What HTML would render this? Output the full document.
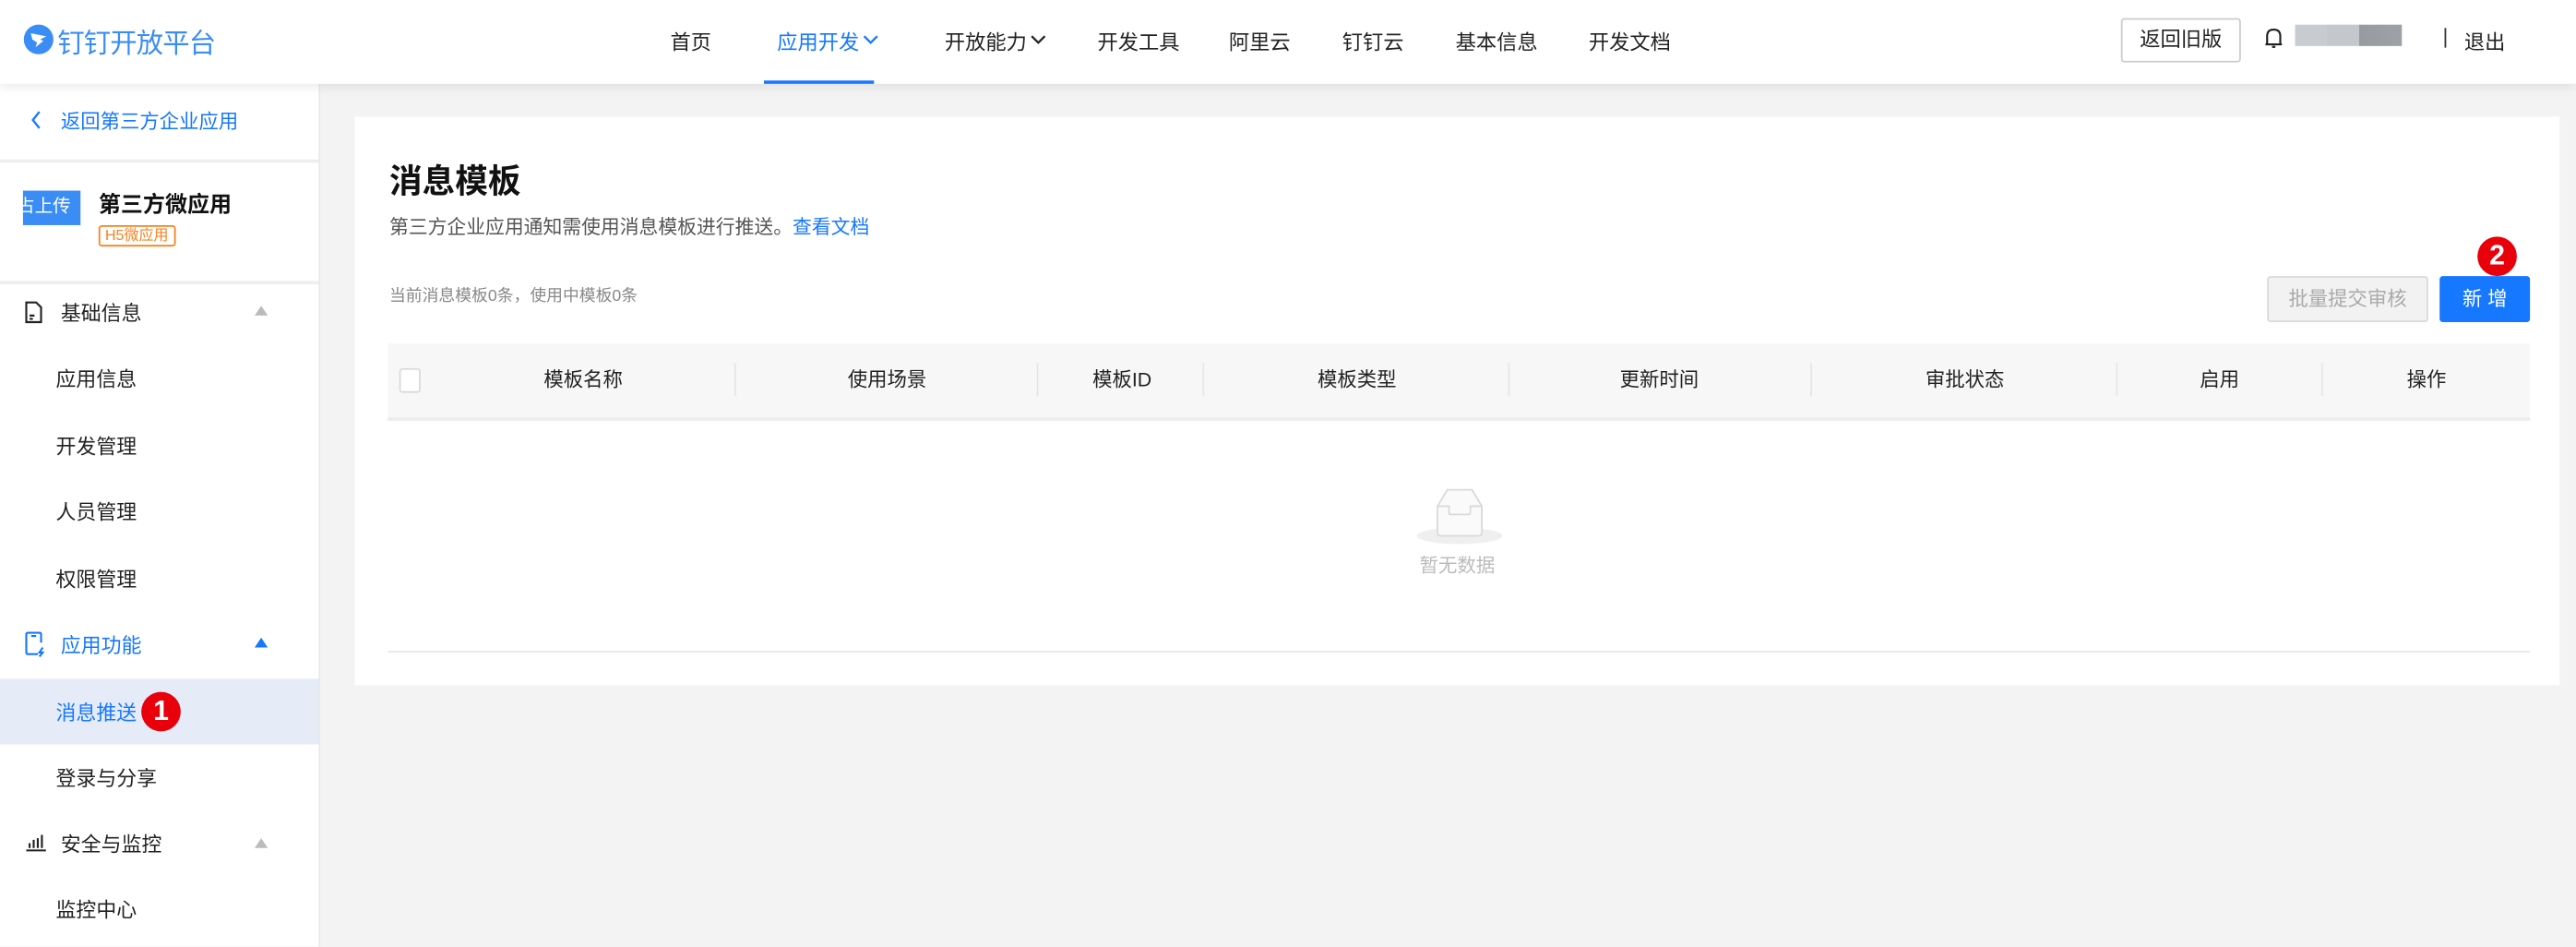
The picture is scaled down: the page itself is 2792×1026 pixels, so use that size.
<!DOCTYPE html>
<html><head><meta charset="utf-8"><style>
html,body{margin:0;padding:0;width:2792px;height:1026px;overflow:hidden;background:#f3f3f3}
#w{position:absolute;left:0;top:0;width:1568px;height:576px;transform:scale(1.78061);transform-origin:0 0;font-family:"Liberation Sans","Noto Sans CJK SC",sans-serif;color:#222;background:#f3f3f3}
.a{position:absolute;white-space:nowrap}
.n{font-size:12.5px;top:15px;color:#222}
.mi{font-size:12.3px;left:34px;color:#222}
.th{top:222px;font-size:12px;color:#222;transform:translateX(-50%)}
.dv{position:absolute;top:221px;width:1px;height:20px;background:#e6e6e6}
.badge{position:absolute;width:24px;height:24px;border-radius:50%;background:#e8000b;color:#fff;font-size:17px;font-weight:bold;text-align:center;line-height:24px}
</style></head><body><div id="w">
<!-- header -->
<div class="a" style="left:0;top:0;width:1568px;height:51px;background:#fff;box-shadow:0 2px 6px rgba(0,0,0,.08);z-index:2">
 <svg class="a" style="left:14px;top:14px" width="19" height="20" viewBox="0 0 20 20"><circle cx="10" cy="10" r="9.5" fill="#3a8df5"/><path d="M5 6 L15 8 L11 10 L13 11 L8 15 L9 12 L6 10 Z" fill="#fff"/></svg>
 <div class="a" style="left:35px;top:13px;font-size:16.5px;color:#3a8df5;letter-spacing:-0.5px">钉钉开放平台</div>
 <div class="a n" style="left:408px">首页</div>
 <div class="a n" style="left:473px;color:#1677ff">应用开发</div>
 <svg class="a" style="left:525px;top:21px" width="10" height="7"><path d="M1 1 L5 5 L9 1" stroke="#1677ff" stroke-width="1.3" fill="none"/></svg>
 <div class="a" style="left:465px;top:49px;width:67px;height:2px;background:#1677ff"></div>
 <div class="a n" style="left:575px">开放能力</div>
 <svg class="a" style="left:627px;top:21px" width="10" height="7"><path d="M1 1 L5 5 L9 1" stroke="#222" stroke-width="1.3" fill="none"/></svg>
 <div class="a n" style="left:668px">开发工具</div>
 <div class="a n" style="left:748px">阿里云</div>
 <div class="a n" style="left:817px">钉钉云</div>
 <div class="a n" style="left:886px">基本信息</div>
 <div class="a n" style="left:967px">开发文档</div>
 <div class="a" style="left:1291px;top:11px;width:71px;height:25px;border:1px solid #ccc;border-radius:2px;font-size:12.5px;text-align:center;line-height:25px">返回旧版</div>
 <svg class="a" style="left:1378px;top:16px" width="12" height="14" viewBox="0 0 12 14"><path d="M2 11 L2 6 Q2 2 6 2 Q10 2 10 6 L10 11 Z M1 11 H11 M5 12.5 H7" stroke="#222" stroke-width="1.2" fill="none"/></svg>
 <div class="a" style="left:1397px;top:15px;width:65px;height:13px;background:linear-gradient(90deg,#c8cbcf 0,#c8cbcf 30%,#c4c7cb 30%,#c4c7cb 60%,#979aa0 60%,#9ea1a6 100%)"></div>
 <div class="a" style="left:1488px;top:17px;width:1px;height:12px;background:#333"></div>
 <div class="a n" style="left:1500px">退出</div>
</div>
<!-- sidebar -->
<div class="a" style="left:0;top:51px;width:194px;height:525px;background:#fff;border-right:1px solid #e8e8e8">
 <svg class="a" style="left:18px;top:16px" width="8" height="12"><path d="M6 1 L2 6 L6 11" stroke="#1677ff" stroke-width="1.3" fill="none"/></svg>
 <div class="a" style="left:37px;top:14px;font-size:12px;color:#1677ff">返回第三方企业应用</div>
 <div class="a" style="left:0;top:46px;width:194px;height:2px;background:#eee"></div>
 <div class="a" style="left:14px;top:65px;width:35px;height:21px;background:#3a8df5;color:#fff;font-size:11px;line-height:21px;overflow:hidden;text-indent:-4px">占上传</div>
 <div class="a" style="left:60px;top:62px;font-size:13.5px;font-weight:bold;color:#111">第三方微应用</div>
 <div class="a" style="left:60px;top:86px;border:1px solid #f58220;border-radius:2px;color:#f58220;font-size:9px;padding:0 3px;line-height:11px">H5微应用</div>
 <div class="a" style="left:0;top:120px;width:194px;height:2px;background:#eee"></div>
</div>
<svg class="a" style="left:15px;top:183px" width="11" height="14" viewBox="0 0 11 14"><path d="M1 1 H7 L10 4 V13 H1 Z M3 9 H6 M3 11 H5" stroke="#222" stroke-width="1.2" fill="none"/></svg>
<div class="a" style="left:37px;top:181px;font-size:12.3px">基础信息</div>
<div class="a" style="left:155px;top:186px;width:0;height:0;border-left:4px solid transparent;border-right:4px solid transparent;border-bottom:6px solid #bbb"></div>
<div class="a mi" style="top:221px">应用信息</div>
<div class="a mi" style="top:262px">开发管理</div>
<div class="a mi" style="top:302px">人员管理</div>
<div class="a mi" style="top:343px">权限管理</div>
<svg class="a" style="left:15px;top:384px" width="12" height="16" viewBox="0 0 12 16"><path d="M8 14 H2 Q1 14 1 13 V2 Q1 1 2 1 H9 Q10 1 10 2 V7 M4 3 H7 M11 10 L9 13 H11 L9 15.5" stroke="#1677ff" stroke-width="1.2" fill="none"/></svg>
<div class="a" style="left:37px;top:383px;font-size:12.3px;color:#1677ff">应用功能</div>
<div class="a" style="left:155px;top:388px;width:0;height:0;border-left:4.5px solid transparent;border-right:4.5px solid transparent;border-bottom:6px solid #1677ff"></div>
<div class="a" style="left:0;top:413px;width:194px;height:40px;background:#e6ecf7"></div>
<div class="a mi" style="top:424px;color:#1677ff">消息推送</div>
<div class="badge" style="left:86px;top:421px">1</div>
<div class="a mi" style="top:464px">登录与分享</div>
<svg class="a" style="left:15px;top:507px" width="13" height="11"><path d="M1 10.5 H13 M3 9 V6 M5.5 9 V4 M8 9 V3 M10.5 9 V1" stroke="#222" stroke-width="1.2"/></svg>
<div class="a" style="left:37px;top:504px;font-size:12.3px">安全与监控</div>
<div class="a" style="left:155px;top:510px;width:0;height:0;border-left:4.5px solid transparent;border-right:4.5px solid transparent;border-bottom:6px solid #bbb"></div>
<div class="a mi" style="top:544px">监控中心</div>
<!-- main card -->
<div class="a" style="left:216px;top:71px;width:1342px;height:346px;background:#fff"></div>
<div class="a" style="left:237px;top:94px;font-size:20px;font-weight:bold;color:#111">消息模板</div>
<div class="a" style="left:237px;top:129px;font-size:11.7px;color:#555">第三方企业应用通知需使用消息模板进行推送。<span style="color:#1677ff">查看文档</span></div>
<div class="a" style="left:237px;top:171px;font-size:10px;color:#888">当前消息模板0条，使用中模板0条</div>
<div class="a" style="left:1380px;top:168px;width:96px;height:26px;border:1px solid #d9d9d9;background:#f2f2f2;color:#aaa;font-size:12px;text-align:center;line-height:26px;border-radius:2px">批量提交审核</div>
<div class="a" style="left:1485px;top:168px;width:55px;height:28px;background:#1677ff;color:#fff;font-size:12px;text-align:center;line-height:28px;border-radius:2px">新 增</div>
<div class="badge" style="left:1508px;top:144px">2</div>
<div class="a" style="left:236px;top:209px;width:1304px;height:45px;background:#f7f7f7;border-bottom:2px solid #ececec"></div>
<div class="a" style="left:243px;top:224px;width:11px;height:13px;border:1px solid #d9d9d9;border-radius:2px;background:#fff"></div>
<div class="a th" style="left:355px">模板名称</div>
<div class="a th" style="left:540px">使用场景</div>
<div class="a th" style="left:683px">模板ID</div>
<div class="a th" style="left:826px">模板类型</div>
<div class="a th" style="left:1010px">更新时间</div>
<div class="a th" style="left:1196px">审批状态</div>
<div class="a th" style="left:1351px">启用</div>
<div class="a th" style="left:1477px">操作</div>
<div class="dv" style="left:447px"></div><div class="dv" style="left:631px"></div><div class="dv" style="left:732px"></div><div class="dv" style="left:918px"></div><div class="dv" style="left:1102px"></div><div class="dv" style="left:1288px"></div><div class="dv" style="left:1413px"></div>
<svg class="a" style="left:861px;top:294px" width="55" height="40" viewBox="0 0 55 40"><ellipse cx="27.5" cy="32" rx="26" ry="5" fill="#efefef"/><path d="M14 14 L20 4 H35 L41 14 V30 Q41 32 39 32 H16 Q14 32 14 30 Z" fill="#fafafa" stroke="#d9d9d9"/><path d="M14 14 H21 V18 Q21 19 22 19 H33 Q34 19 34 18 V14 H41" fill="none" stroke="#d9d9d9"/></svg>
<div class="a" style="left:864px;top:336px;font-size:11.5px;color:#bbb">暂无数据</div>
<div class="a" style="left:236px;top:396px;width:1304px;height:1px;background:#e8e8e8"></div>
</div></body></html>
